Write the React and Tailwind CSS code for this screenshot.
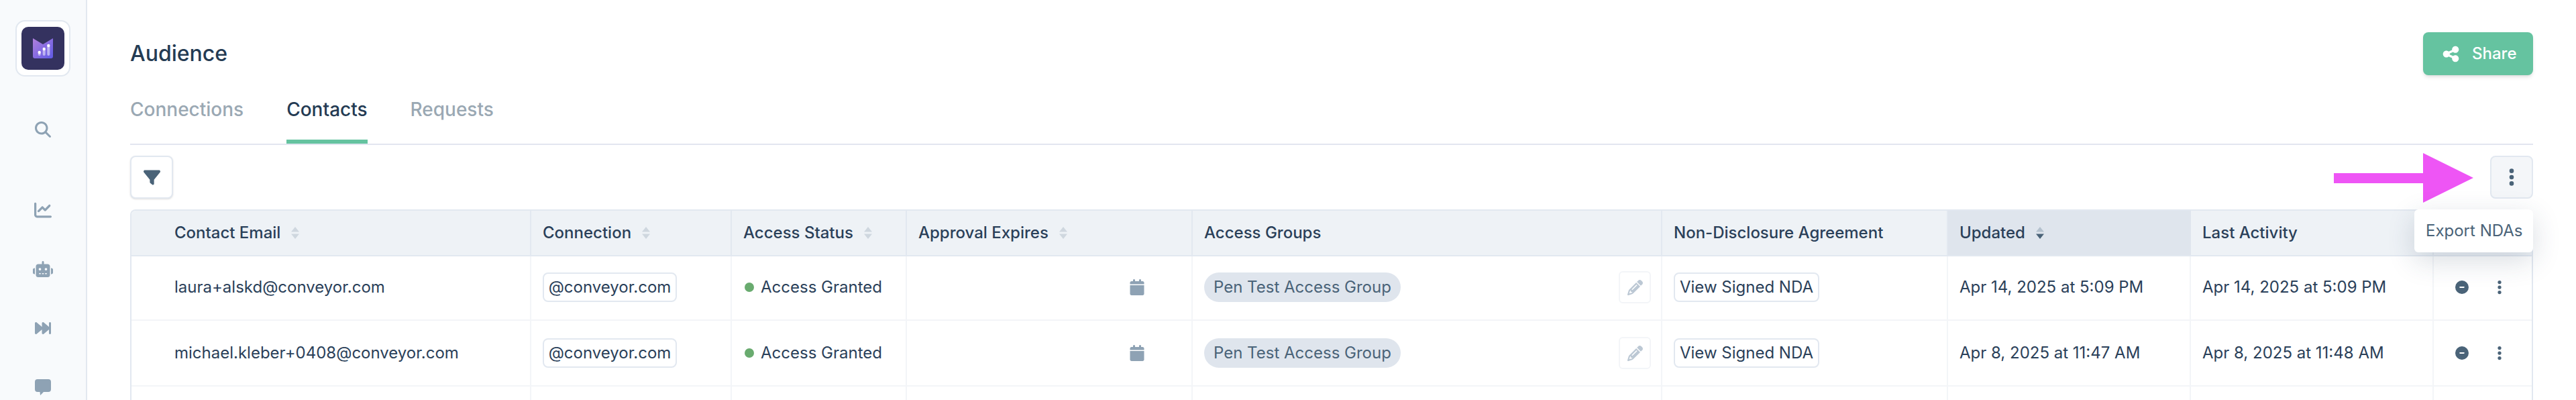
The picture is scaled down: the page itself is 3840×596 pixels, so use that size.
import {
  FaMagnifyingGlass,
  FaChartLine,
  FaRobot,
  FaForwardFast,
  FaFilter,
  FaEllipsisVertical,
  FaShareNodes,
  FaCalendar,
  FaPencil,
  FaCircleMinus,
} from "react-icons/fa6";

const rows = [
  {
    email: "laura+alskd@conveyor.com",
    updated: "Apr 14, 2025 at 5:09 PM",
    activity: "Apr 14, 2025 at 5:09 PM",
  },
  {
    email: "michael.kleber+0408@conveyor.com",
    updated: "Apr 8, 2025 at 11:47 AM",
    activity: "Apr 8, 2025 at 11:48 AM",
    tall: true,
  },
];

function Logo() {
  return (
    <div className="mt-[30px] w-[82px] h-[84px] shrink-0 rounded-[14px] border-2 border-[#e2e8f0] bg-white flex items-center justify-center">
      <svg width="64" height="64" viewBox="0 0 64 64">
        <defs>
          <linearGradient id="logoGrad" x1="0" y1="0" x2="1" y2="1">
            <stop offset="0" stopColor="#b07fdc" />
            <stop offset="1" stopColor="#5f5ae6" />
          </linearGradient>
        </defs>
        <rect width="64" height="64" rx="10" fill="#34325f" />
        <path d="M17 17 L32 26 L47 17 V44 q0 3 -3 3 H20 q-3 0 -3 -3 Z" fill="url(#logoGrad)" />
        <rect x="24.7" y="38" width="4" height="5" rx="2" fill="#fff" fillOpacity="0.5" />
        <rect x="31.7" y="33" width="4" height="10" rx="2" fill="#fff" fillOpacity="0.5" />
        <rect x="38.3" y="28" width="4" height="15" rx="2" fill="#fff" fillOpacity="0.5" />
        <circle cx="26.7" cy="38" r="2.2" fill="#fff" />
        <circle cx="33.7" cy="33" r="2.2" fill="#fff" />
        <circle cx="40.3" cy="28" r="2.2" fill="#fff" />
      </svg>
    </div>
  );
}

function CommentIcon() {
  return (
    <svg width="24" height="24" viewBox="0 0 24 24" fill="currentColor">
      <path d="M4 0 H20 a4 4 0 0 1 4 4 V15 a4 4 0 0 1 -4 4 H13 L8 24 L7.5 19 H4 a4 4 0 0 1 -4 -4 V4 a4 4 0 0 1 4 -4 Z" />
    </svg>
  );
}

function Sidebar() {
  return (
    <aside className="w-[130px] h-full shrink-0 bg-[#f8fafc] border-r-2 border-[#e2e8f0] flex flex-col items-center text-[#8ea2b4] overflow-hidden">
      <Logo />
      <div className="mt-[35px] h-[88px] shrink-0 flex items-center">
        <FaMagnifyingGlass size={24} />
      </div>
      <div className="mt-[32px] h-[88px] shrink-0 flex items-center">
        <FaChartLine size={26} />
      </div>
      <div className="h-[88px] shrink-0 flex items-center">
        <FaRobot size={30} />
      </div>
      <div className="h-[88px] shrink-0 flex items-center">
        <FaForwardFast size={24} />
      </div>
      <div className="h-[88px] shrink-0 flex items-center">
        <CommentIcon />
      </div>
    </aside>
  );
}

function SortIcon({ active }) {
  return (
    <svg width="12" height="18" viewBox="0 0 12 18" className="shrink-0">
      <path d="M6 0 L12 7.5 H0 Z" fill={active ? "#b4c1ce" : "#cfd7df"} />
      <path d="M6 18 L12 10.5 H0 Z" fill={active ? "#4a6378" : "#cfd7df"} />
    </svg>
  );
}

function HeaderCell({ children, sort, active, first, last }) {
  return (
    <th
      className={`h-[68px] p-0 border-b-2 border-[#e2e8f0] text-left font-medium ${
        active ? "bg-[#dfe5ed]" : "bg-[#eef2f6]"
      } ${last || active ? "" : "border-r-2"}`}
    >
      <div className={`flex items-center gap-4 ${first ? "pl-[64px]" : "pl-[17px]"}`}>
        <span>{children}</span>
        {sort && <SortIcon active={active} />}
      </div>
    </th>
  );
}

function Chip({ children, className = "" }) {
  return (
    <span
      className={`inline-flex items-center justify-center h-[44px] border-2 border-[#e2e8f0] rounded-lg bg-white ${className}`}
    >
      {children}
    </span>
  );
}

function Row({ row }) {
  const height = row.tall ? "h-[98px]" : "h-[96px] pb-[2px]";
  const cell = `p-0 ${height} border-b-2 border-r-2 border-[#f3f5f8]`;
  return (
    <tr>
      <td className={`${cell} pl-[64px]`}>{row.email}</td>
      <td className={`${cell} pl-[17px]`}>
        <Chip className="w-[200px]">@conveyor.com</Chip>
      </td>
      <td className={`${cell} pl-[19px]`}>
        <div className="flex items-center gap-[10px]">
          <span className="w-[14px] h-[14px] rounded-full bg-[#69ab6f]" />
          Access Granted
        </div>
      </td>
      <td className={cell}>
        <div className="flex justify-end pr-[69px] text-[#8ea2b4]">
          <FaCalendar size={24} />
        </div>
      </td>
      <td className={`${cell} pl-[17px] pr-[15px]`}>
        <div className="flex items-center justify-between">
          <span className="inline-flex items-center h-[44px] px-[14px] rounded-full bg-[#dfe5ed] text-[#4a6378]">
            Pen Test Access Group
          </span>
          <span className="w-[48px] h-[48px] flex items-center justify-center border-2 border-[#f3f5f8] rounded-md text-[#bcc8d4]">
            <FaPencil size={23} />
          </span>
        </div>
      </td>
      <td className={`${cell} pl-[17px]`}>
        <Chip className="w-[217px]">View Signed NDA</Chip>
      </td>
      <td className={`${cell} pl-[17px]`}>{row.updated}</td>
      <td className={`${cell} pl-[17px]`}>{row.activity}</td>
      <td className={`p-0 ${height} border-b-2 border-[#f3f5f8]`}>
        <div className="flex items-center gap-[34px] pl-[32px] text-[#4a6378]">
          <FaCircleMinus size={20} />
          <FaEllipsisVertical size={24} />
        </div>
      </td>
    </tr>
  );
}

function ContactsTable() {
  return (
    <div className="border-2 border-b-0 border-[#e2e8f0] rounded-t-lg overflow-hidden">
      <table className="w-full table-fixed border-separate border-spacing-0 text-[24px] text-[#2a4059]">
        <colgroup>
          <col className="w-[596px]" />
          <col className="w-[299px]" />
          <col className="w-[261px]" />
          <col className="w-[426px]" />
          <col className="w-[700px]" />
          <col className="w-[426px]" />
          <col className="w-[362px]" />
          <col className="w-[362px]" />
          <col />
        </colgroup>
        <thead>
          <tr>
            <HeaderCell first sort>Contact Email</HeaderCell>
            <HeaderCell sort>Connection</HeaderCell>
            <HeaderCell sort>Access Status</HeaderCell>
            <HeaderCell sort>Approval Expires</HeaderCell>
            <HeaderCell>Access Groups</HeaderCell>
            <HeaderCell>Non-Disclosure Agreement</HeaderCell>
            <HeaderCell sort active>Updated</HeaderCell>
            <HeaderCell>Last Activity</HeaderCell>
            <HeaderCell last />
          </tr>
        </thead>
        <tbody>
          {rows.map((row) => (
            <Row key={row.email} row={row} />
          ))}
          <tr>
            <td className="h-[40px] border-r-2 border-[#f3f5f8]" />
            <td className="border-r-2 border-[#f3f5f8]" />
            <td className="border-r-2 border-[#f3f5f8]" />
            <td className="border-r-2 border-[#f3f5f8]" />
            <td className="border-r-2 border-[#f3f5f8]" />
            <td className="border-r-2 border-[#f3f5f8]" />
            <td className="border-r-2 border-[#f3f5f8]" />
            <td className="border-r-2 border-[#f3f5f8]" />
            <td />
          </tr>
        </tbody>
      </table>
    </div>
  );
}

export default function App() {
  return (
    <div className="w-[3840px] h-[596px] overflow-hidden flex bg-white font-['Inter',sans-serif]">
      <Sidebar />
      <main className="relative flex-1 px-16 pt-12">
        <div className="flex items-center justify-between h-16">
          <h1 className="text-[32px] font-medium text-[#243b53]">Audience</h1>
          <button className="flex items-center gap-[18px] h-16 w-[164px] pl-[28px] rounded-lg bg-[#65c3a0] text-white text-[24px] font-medium shadow-md">
            <FaShareNodes size={27} />
            Share
          </button>
        </div>

        <div className="mt-[22px] flex gap-16 border-b-2 border-[#e2e6f0] text-[28px] leading-[34px] font-medium text-[#9aa8b3]">
          <div className="h-[80px] pt-3">Connections</div>
          <div className="h-[80px] pt-3 text-[#243b53] border-b-[6px] border-[#65c3a0]">Contacts</div>
          <div className="h-[80px] pt-3">Requests</div>
        </div>

        <div className="flex justify-between my-4">
          <button className="w-16 h-16 flex items-center justify-center border-2 border-[#e2e8f0] rounded-lg bg-white text-[#4a6378] shadow-sm">
            <FaFilter size={25} />
          </button>
          <button className="w-16 h-16 flex items-center justify-center border-2 border-[#e2e8f0] rounded-lg bg-[#f4f6f9] text-[#4a6378]">
            <FaEllipsisVertical size={30} />
          </button>
        </div>

        <ContactsTable />

        <svg
          width="208"
          height="74"
          viewBox="0 0 208 74"
          className="absolute left-[3349px] top-[228px]"
        >
          <path d="M0 30 H133 V0 L208 37 L133 74 V45 H0 Z" fill="#ee55f5" />
        </svg>

        <div className="absolute right-16 top-[312px] w-[177px] h-16 flex items-center pl-[17px] rounded-md bg-white text-[24px] text-[#4a6378] shadow-[0_12px_40px_rgba(40,60,90,0.18)]">
          Export NDAs
        </div>
      </main>
    </div>
  );
}
